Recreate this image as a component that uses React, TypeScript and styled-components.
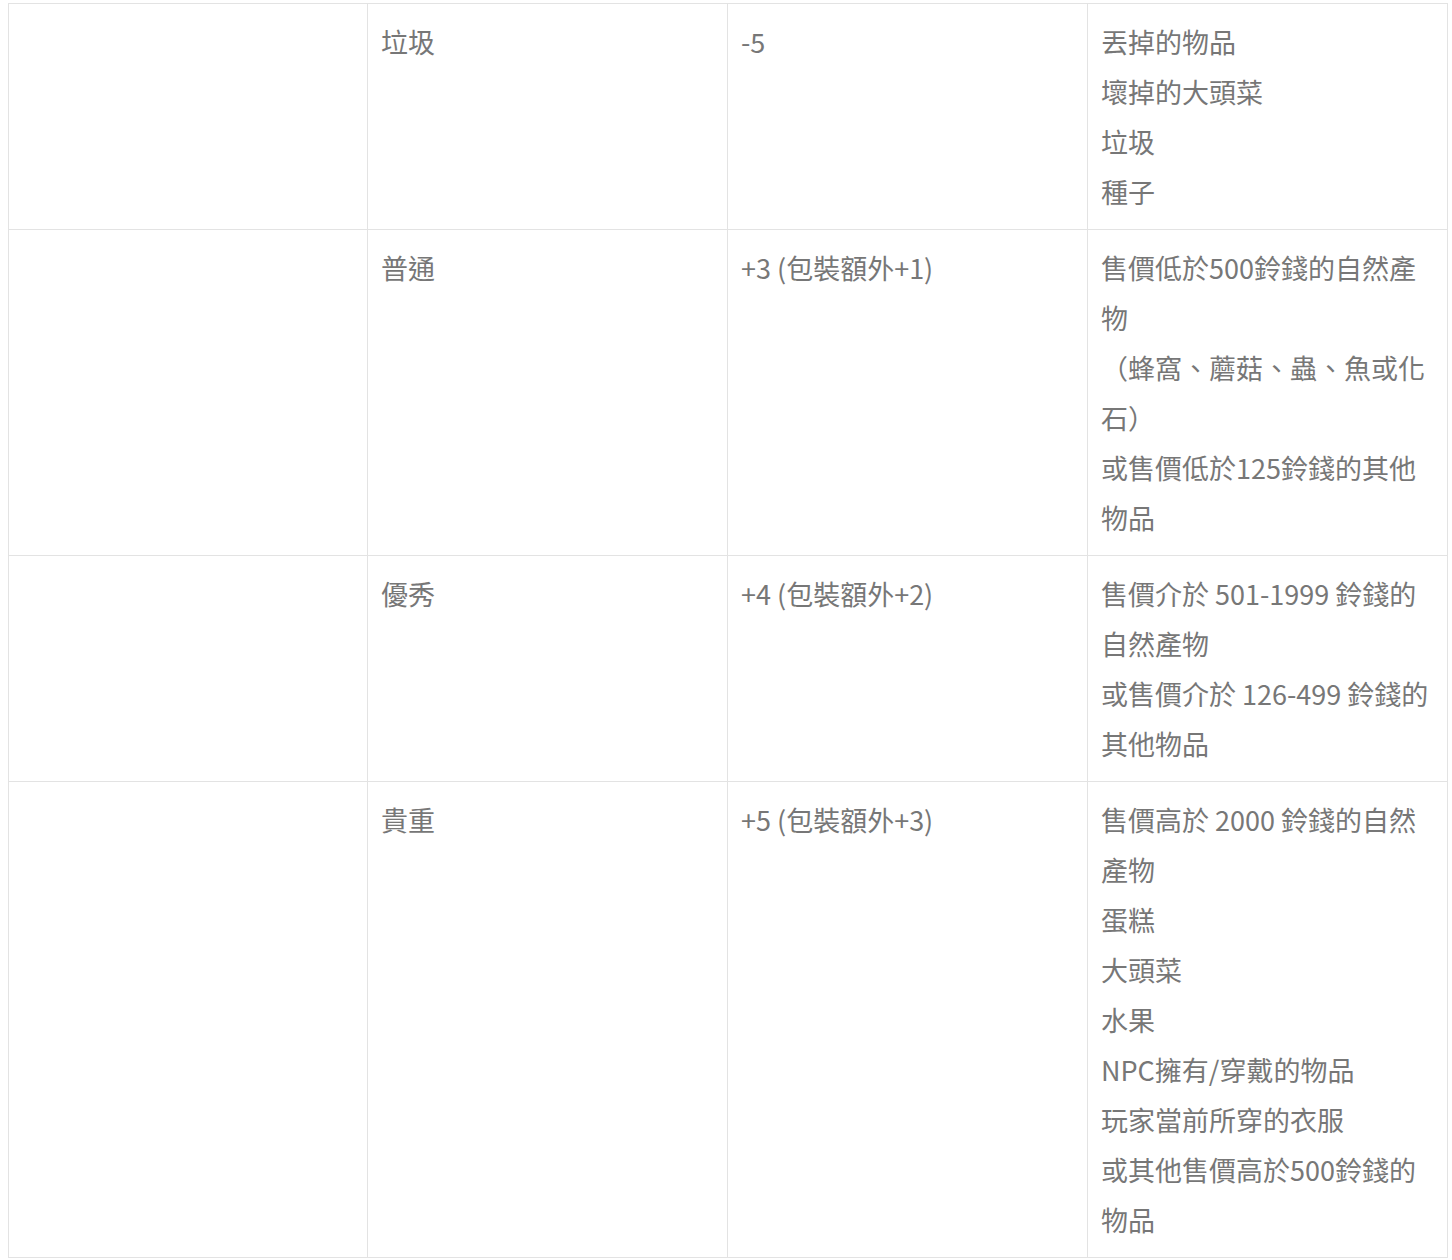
import * as React from "react";
import styled, {createGlobalStyle} from "styled-components";

const GlobalStyle = createGlobalStyle`
  html, body {
    margin: 0;
    padding: 0;
    background: #fff;
  }
  body {
    font-family: "Noto Sans CJK TC", "Noto Sans", sans-serif;
  }
`;

const Page = styled.div`
  padding: 3px 5px 0 8px;
  box-sizing: border-box;
`;

const Table = styled.table`
  width: 1439px;
  border-collapse: collapse;
  table-layout: fixed;
  color: #777;
  font-size: 27px;
  line-height: 50px;
  text-spacing-trim: space-all;
`;

const Col = styled.col<{ $w: number }>`
  width: ${p => p.$w}px;
`;

const Cell = styled.td`
  border: 1px solid #e3e3e3;
  padding: 13px 14px 12px 13px;
  vertical-align: top;
  box-sizing: border-box;
  word-break: break-all;
`;

const Line = styled.div`
  white-space: normal;
`;

interface Row {
    grade: string
    score: string
    items: string[]
}

const rows: Row[] = [
    {grade: "垃圾", score: "-5", items: ["丟掉的物品", "壞掉的大頭菜", "垃圾", "種子"]},
    {
        grade: "普通", score: "+3 (包裝額外+1)",
        items: ["售價低於500鈴錢的自然產物", "（蜂窩、蘑菇、蟲、魚或化石）", "或售價低於125鈴錢的其他物品"]
    },
    {
        grade: "優秀", score: "+4 (包裝額外+2)",
        items: ["售價介於 501-1999 鈴錢的自然產物", "或售價介於 126-499 鈴錢的其他物品"]
    },
    {
        grade: "貴重", score: "+5 (包裝額外+3)",
        items: ["售價高於 2000 鈴錢的自然產物", "蛋糕", "大頭菜", "水果", "NPC擁有/穿戴的物品", "玩家當前所穿的衣服", "或其他售價高於500鈴錢的物品"]
    },
];

export default function App() {
    return <>
        <GlobalStyle/>
        <Page>
            <Table>
                <colgroup>
                    <Col $w={359}/>
                    <Col $w={360}/>
                    <Col $w={360}/>
                    <Col $w={360}/>
                </colgroup>
                <tbody>
                {rows.map((r, k) => <tr key={k}>
                    <Cell/>
                    <Cell>{r.grade}</Cell>
                    <Cell>{r.score}</Cell>
                    <Cell>{r.items.map((v, i) => <Line key={i}>{v}</Line>)}</Cell>
                </tr>)}
                </tbody>
            </Table>
        </Page>
    </>;
}
